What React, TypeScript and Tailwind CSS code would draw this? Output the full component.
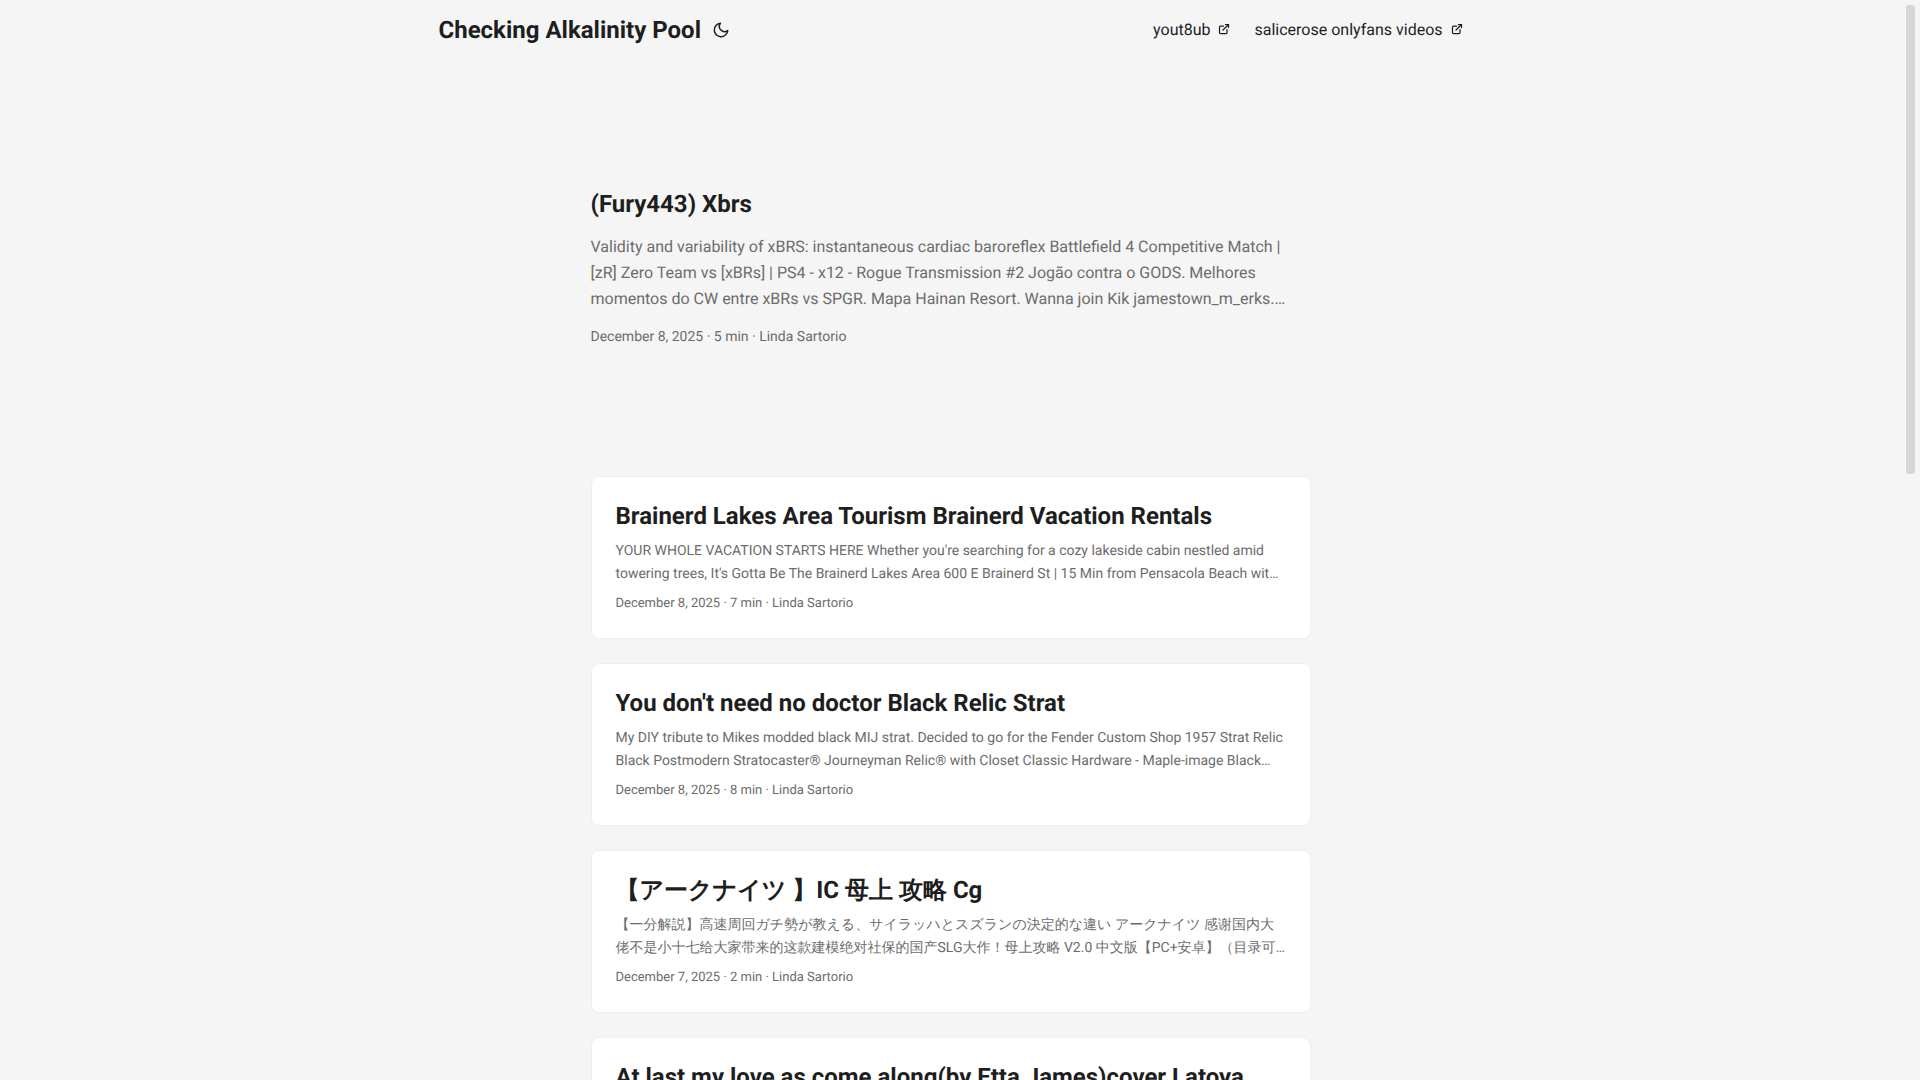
type Post = {
  title: string;
  summary?: string;
  meta?: string;
};

const menu = ["yout8ub", "salicerose onlyfans videos"];

const posts: Post[] = [
  {
    title: "Brainerd Lakes Area Tourism Brainerd Vacation Rentals",
    summary:
      "YOUR WHOLE VACATION STARTS HERE Whether you're searching for a cozy lakeside cabin nestled amid towering trees, It's Gotta Be The Brainerd Lakes Area 600 E Brainerd St | 15 Min from Pensacola Beach wit…",
    meta: "December 8, 2025 · 7 min · Linda Sartorio",
  },
  {
    title: "You don't need no doctor Black Relic Strat",
    summary:
      "My DIY tribute to Mikes modded black MIJ strat. Decided to go for the Fender Custom Shop 1957 Strat Relic Black Postmodern Stratocaster® Journeyman Relic® with Closet Classic Hardware - Maple-image Black…",
    meta: "December 8, 2025 · 8 min · Linda Sartorio",
  },
  {
    title: "【アークナイツ 】IC 母上 攻略 Cg",
    summary:
      "【一分解説】高速周回ガチ勢が教える、サイラッハとスズランの決定的な違い アークナイツ 感谢国内大佬不是小十七给大家带来的这款建模绝对社保的国产SLG大作！母上攻略 V2.0 中文版【PC+安卓】（目录可…",
    meta: "December 7, 2025 · 2 min · Linda Sartorio",
  },
  {
    title: "At last my love as come along(by Etta James)cover Latoya",
  },
];

function MoonIcon() {
  return (
    <svg
      width="24"
      height="18"
      viewBox="0 0 24 24"
      fill="none"
      stroke="currentColor"
      strokeWidth="2"
      strokeLinecap="round"
      strokeLinejoin="round"
    >
      <path d="M21 12.79A9 9 0 1 1 11.21 3 7 7 0 0 0 21 12.79z" />
    </svg>
  );
}

function ExternalIcon() {
  return (
    <svg
      className="inline-block align-baseline"
      width="12"
      height="12"
      viewBox="0 0 24 24"
      fill="none"
      stroke="currentColor"
      strokeWidth="2.5"
      strokeLinecap="round"
      strokeLinejoin="round"
    >
      <path d="M18 13v6a2 2 0 0 1-2 2H5a2 2 0 0 1-2-2V8a2 2 0 0 1 2-2h6" />
      <path d="M15 3h6v6" />
      <path d="M10 14L21 3" />
    </svg>
  );
}

function Header() {
  return (
    <header className="mx-auto flex max-w-[1072px] flex-wrap justify-between px-6">
      <div className="flex items-center">
        <a href="#" className="text-2xl leading-[60px] font-bold">
          Checking Alkalinity Pool
        </a>
        <button type="button" aria-label="Toggle theme" className="mx-2 cursor-pointer">
          <MoonIcon />
        </button>
      </div>
      <nav>
        <ul className="flex gap-6">
          {menu.map((label) => (
            <li key={label}>
              <a href="#" className="text-base leading-[60px]">
                {label}&nbsp;&nbsp;
                <ExternalIcon />
              </a>
            </li>
          ))}
        </ul>
      </nav>
    </header>
  );
}

function PostCard({ post }: { post: Post }) {
  return (
    <article className="mb-6 rounded-lg border border-[#eeeeee] bg-white p-6">
      <h2 className="text-2xl leading-[31px] font-bold">
        <a href="#">{post.title}</a>
      </h2>
      {post.summary && <p className="my-2 text-sm leading-[23px] text-[#6c6c6c]">{post.summary}</p>}
      {post.meta && <footer className="text-[13px] leading-5 text-[#6c6c6c]">{post.meta}</footer>}
    </article>
  );
}

export default function App() {
  return (
    <div className="flex h-screen overflow-hidden bg-[#f5f5f5] font-['Roboto',sans-serif] text-[#1e1e1e] [text-rendering:geometricPrecision]">
      <div className="min-w-0 flex-1">
        <Header />
        <main className="mx-auto max-w-[768px] p-6">
          <article className="mt-6 mb-12 flex min-h-80 flex-col justify-center">
            <h1 className="text-2xl font-bold">
              <a href="#">(Fury443) Xbrs</a>
            </h1>
            <p className="my-[14px] text-base leading-[26px] text-[#6c6c6c]">
              Validity and variability of xBRS: instantaneous cardiac baroreflex Battlefield 4 Competitive Match | [zR]
              Zero Team vs [xBRs] | PS4 - x12 - Rogue Transmission #2 Jogão contra o GODS. Melhores momentos do CW entre
              xBRs vs SPGR. Mapa Hainan Resort. Wanna join Kik jamestown_m_erks.…
            </p>
            <footer className="text-sm leading-[22px] text-[#6c6c6c]">December 8, 2025 · 5 min · Linda Sartorio</footer>
          </article>
          {posts.map((post) => (
            <PostCard key={post.title} post={post} />
          ))}
        </main>
      </div>
      {/* scrollbar */}
      <div className="w-[19px] shrink-0 p-[5px]">
        <div className="h-[469px] rounded-[3px] bg-[#d6d6d6]" />
      </div>
    </div>
  );
}
